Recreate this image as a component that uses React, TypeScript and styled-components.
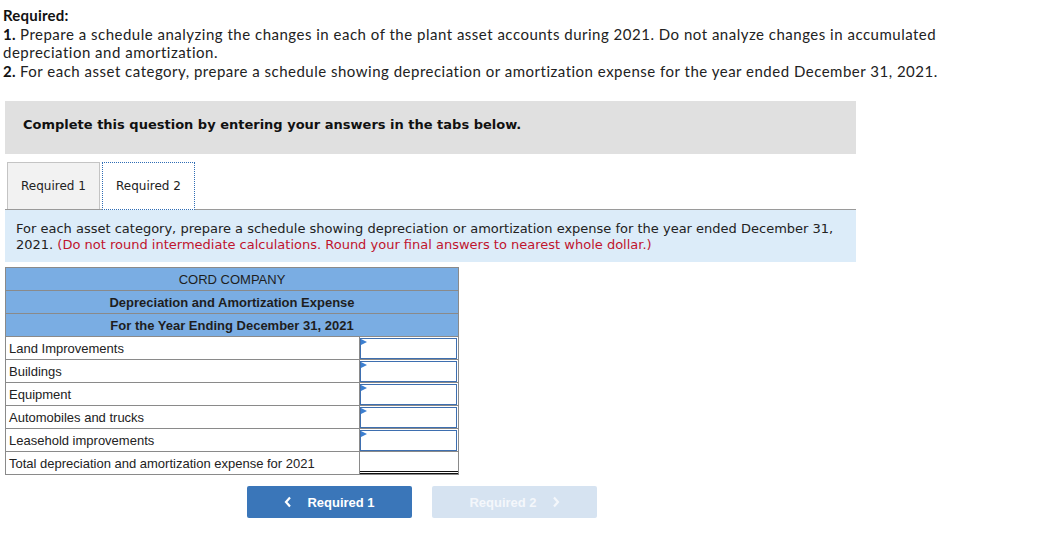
import React from "react";
import styled, { createGlobalStyle } from "styled-components";

const Global = createGlobalStyle`
  html, body {
    margin: 0;
    padding: 0;
    background: #fff;
  }
`;

const Page = styled.div`
  padding: 6px 0 0 3px;
  width: 1050px;
  box-sizing: border-box;
`;

const Intro = styled.div`
  font-family: Lato, "Open Sans", sans-serif;
  font-size: 15px;
  letter-spacing: 0.5px;
  line-height: 18.5px;
  color: #222;
  width: 960px;

  b {
    font-weight: 700;
    color: #111;
    letter-spacing: 0.2px;
  }
`;

const Panel = styled.div`
  margin: 21px 0 0 2px;
  width: 851px;
`;

const Banner = styled.div`
  background: #e0e0e0;
  height: 53px;
  box-sizing: border-box;
  padding: 0 0 6px 18px;
  display: flex;
  align-items: center;
  font-family: "DejaVu Sans", Verdana, sans-serif;
  font-size: 13px;
  font-weight: bold;
  color: #111;
`;

const TabBar = styled.div`
  display: flex;
  gap: 2px;
  margin-top: 8px;
  padding-left: 2px;
  border-bottom: 1px solid #9a9a9a;
`;

const Tab = styled.div<{ $active?: boolean }>`
  width: 93px;
  box-sizing: border-box;
  display: flex;
  align-items: center;
  justify-content: center;
  font-family: "DejaVu Sans", Verdana, sans-serif;
  font-size: 12px;
  color: #222;
  background: ${(p) => (p.$active ? "#fff" : "#f2f2f2")};
  border: ${(p) => (p.$active ? "1px dotted #2f6db5" : "1px solid #c4c4c4")};
  border-bottom: ${(p) => (p.$active ? "1px dotted #2f6db5" : "none")};
  margin-bottom: ${(p) => (p.$active ? "-1px" : "0")};
  height: ${(p) => (p.$active ? "48px" : "47px")};
`;

const Instructions = styled.div`
  background: #dcecf9;
  padding: 11px 11px 9px;
  font-family: "DejaVu Sans", Verdana, sans-serif;
  font-size: 13px;
  line-height: 16px;
  color: #222;
`;

const Note = styled.span`
  color: #c0142e;
`;

const Schedule = styled.table`
  margin: 5px 0 0 2px;
  border-collapse: collapse;
  width: 454px;
  font-family: "Liberation Sans", Arial, sans-serif;
  font-size: 13px;
  color: #222;
`;

const HeadCell = styled.td<{ $bold?: boolean }>`
  background: #7aade3;
  border: 1px solid #8a8a8a;
  height: 22px;
  padding: 0;
  text-align: center;
  color: #1e1e1e;
  font-weight: ${(p) => (p.$bold ? "bold" : "normal")};
`;

const LabelCell = styled.td`
  border: 1px solid #8a8a8a;
  height: 22px;
  padding: 0 0 0 3px;
  width: 350px;
`;

const InputCell = styled.td`
  border: 1px solid #8a8a8a;
  padding: 0;
  height: 22px;
`;

const AmountBox = styled.div`
  position: relative;
  height: 21px;
  margin: 0 1px 0 0;
  border: 1.5px solid #3e6fb0;
  box-sizing: border-box;
  background: #fff;

  &::before {
    content: "";
    position: absolute;
    left: 0;
    top: 0;
    border-left: 6px solid #3d7fd0;
    border-top: 3.5px solid transparent;
    border-bottom: 3.5px solid transparent;
  }
`;

const TotalBox = styled.div`
  height: 22px;
  border-bottom: 3px double #111;
  box-sizing: border-box;
  margin-top: -1px;
`;

const Nav = styled.div`
  display: flex;
  gap: 20px;
  margin: 11px 0 0 244px;
`;

const NavButton = styled.button<{ $disabled?: boolean }>`
  width: 165px;
  height: 32px;
  border: none;
  border-radius: 2px;
  background: ${(p) => (p.$disabled ? "#d6e3f1" : "#3a76b9")};
  color: ${(p) => (p.$disabled ? "#f4f7fb" : "#fff")};
  font-family: "Liberation Sans", Arial, sans-serif;
  font-size: 13px;
  font-weight: bold;
  display: flex;
  align-items: center;
  justify-content: center;
  gap: 15px;
  padding: 0;
`;

const rows = [
  "Land Improvements",
  "Buildings",
  "Equipment",
  "Automobiles and trucks",
  "Leasehold improvements",
];

function Chevron({ dir }: { dir: "left" | "right" }) {
  return (
    <svg width="8" height="12" viewBox="0 0 8 12">
      <path
        d={dir === "left" ? "M6 1.5 L2 6 L6 10.5" : "M2 1.5 L6 6 L2 10.5"}
        fill="none"
        stroke="currentColor"
        strokeWidth="2.2"
      />
    </svg>
  );
}

export default function App() {
  return (
    <Page>
      <Global />
      <Intro>
        <b>Required:</b>
        <br />
        <b>1.</b> Prepare a schedule analyzing the changes in each of the plant asset accounts during 2021. Do not analyze changes in accumulated
        <br />
        depreciation and amortization.
        <br />
        <b>2.</b> For each asset category, prepare a schedule showing depreciation or amortization expense for the year ended December 31, 2021.
      </Intro>
      <Panel>
        <Banner>Complete this question by entering your answers in the tabs below.</Banner>
        <TabBar>
          <Tab>Required 1</Tab>
          <Tab $active>Required 2</Tab>
        </TabBar>
        <Instructions>
          For each asset category, prepare a schedule showing depreciation or amortization expense for the year ended December 31, 2021.{" "}
          <Note>(Do not round intermediate calculations. Round your final answers to nearest whole dollar.)</Note>
        </Instructions>
      </Panel>
      <Schedule>
        <tbody>
          <tr>
            <HeadCell colSpan={2}>CORD COMPANY</HeadCell>
          </tr>
          <tr>
            <HeadCell colSpan={2} $bold>Depreciation and Amortization Expense</HeadCell>
          </tr>
          <tr>
            <HeadCell colSpan={2} $bold>For the Year Ending December 31, 2021</HeadCell>
          </tr>
          {rows.map((r) => (
            <tr key={r}>
              <LabelCell>{r}</LabelCell>
              <InputCell>
                <AmountBox />
              </InputCell>
            </tr>
          ))}
          <tr>
            <LabelCell>Total depreciation and amortization expense for 2021</LabelCell>
            <InputCell>
              <TotalBox />
            </InputCell>
          </tr>
        </tbody>
      </Schedule>
      <Nav>
        <NavButton>
          <Chevron dir="left" />
          Required 1
        </NavButton>
        <NavButton $disabled>
          Required 2
          <Chevron dir="right" />
        </NavButton>
      </Nav>
    </Page>
  );
}
